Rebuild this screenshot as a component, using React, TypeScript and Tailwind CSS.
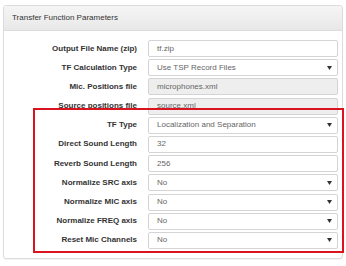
const rows = [
  { label: "Output File Name (zip)", value: "tf.zip", kind: "input" },
  { label: "TF Calculation Type", value: "Use TSP Record Files", kind: "select" },
  { label: "Mic. Positions file", value: "microphones.xml", kind: "disabled" },
  { label: "Source positions file", value: "source.xml", kind: "disabled" },
  { label: "TF Type", value: "Localization and Separation", kind: "select" },
  { label: "Direct Sound Length", value: "32", kind: "input" },
  { label: "Reverb Sound Length", value: "256", kind: "input" },
  { label: "Normalize SRC axis", value: "No", kind: "select" },
  { label: "Normalize MIC axis", value: "No", kind: "select" },
  { label: "Normalize FREQ axis", value: "No", kind: "select" },
  { label: "Reset Mic Channels", value: "No", kind: "select" },
];

const Field = ({ value, kind }: { value: string; kind: string }) => {
  const bg = kind === "disabled" ? "bg-[#eeeeee]" : "bg-white";
  return (
    <div className={`flex items-center justify-between w-[190px] h-[17px] border border-[#d4d4d4] rounded-[2px] pl-[8px] pr-[5px] ${bg}`}>
      <span className="text-[8px] text-[#666] leading-none">{value}</span>
      {kind === "select" && (
        <svg width="5" height="4" viewBox="0 0 5 4">
          <path d="M0 0 L5 0 L2.5 4 Z" fill="#333" />
        </svg>
      )}
    </div>
  );
};

export default function App() {
  return (
    <div className="relative w-[346px] h-[266px] bg-white pt-[5px] pl-[3px]" style={{ fontFamily: '"Liberation Sans", Arial, sans-serif' }}>
      <div className="w-[340px] h-[254px] border border-[#dcdcdc] rounded-[3px] shadow-[0_1px_1px_rgba(0,0,0,0.05)] overflow-hidden">
        <div className="h-[25px] flex items-center px-[8px] bg-gradient-to-b from-[#f5f5f5] to-[#e8e8e8] border-b border-[#dcdcdc]">
          <span className="text-[8px] text-[#333]">Transfer Function Parameters</span>
        </div>
        <div className="flex flex-col gap-[2.2px] pt-[9px]">
          {rows.map((r) => (
            <div key={r.label} className="flex items-center">
              <div className="w-[133px] text-right text-[8px] font-bold text-[#333] leading-none">{r.label}</div>
              <div className="ml-[11px]">
                <Field value={r.value} kind={r.kind} />
              </div>
            </div>
          ))}
        </div>
      </div>
      <div className="absolute left-[33px] top-[108px] w-[311px] h-[145px] border-2 border-[#d9141e]" />
    </div>
  );
}
